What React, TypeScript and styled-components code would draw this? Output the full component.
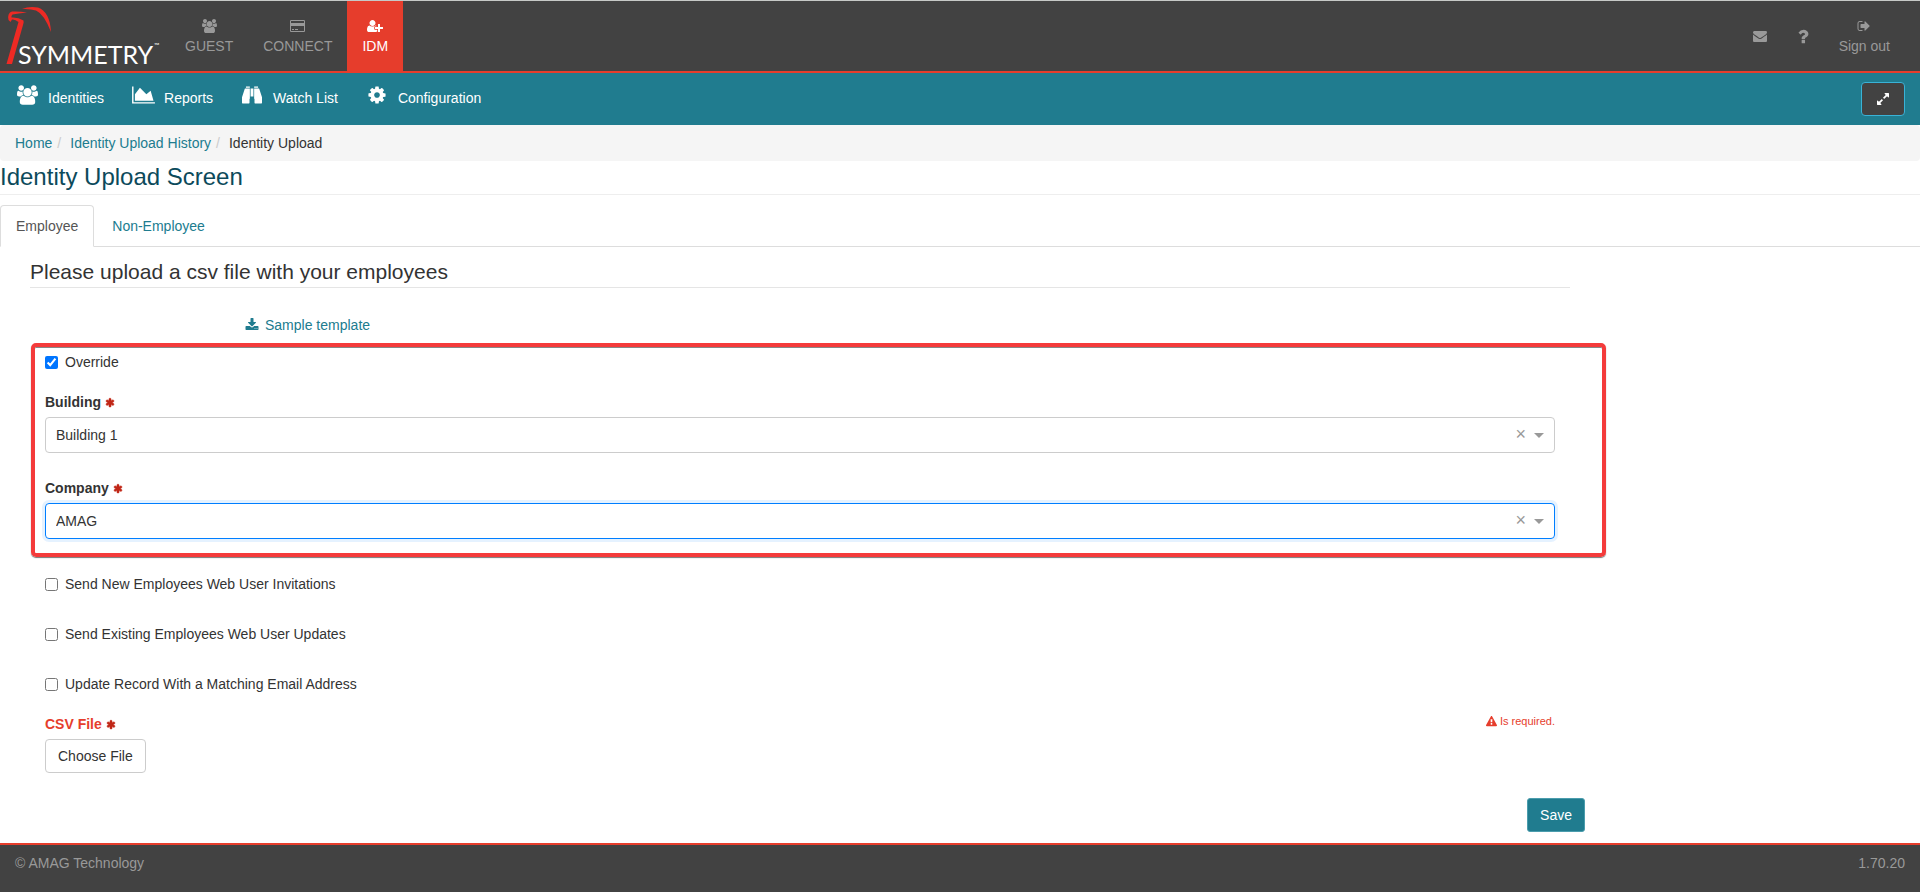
import React, { useRef, useState } from "react";
import styled, { createGlobalStyle, css } from "styled-components";

const teal = "#207c8f";
const red = "#e63d2c";
const dark = "#424242";

const GlobalStyle = createGlobalStyle`
  * { box-sizing: border-box; }
  body {
    margin: 0;
    background: #fff;
    color: #333;
    font: 14px/20px "Liberation Sans", Arial, sans-serif;
  }
  a { color: ${teal}; text-decoration: none; }
  button, select, input { font: inherit; color: inherit; }
`;

type Glyph = { w: number; x?: number; stroke?: number; d: string };

const glyphs: Record<string, Glyph> = {
  users: {
    w: 1920,
    d: "M593 896q-162 5-265 128h-134q-82 0-138-40.5t-56-118.5q0-353 124-353 6 0 43.5 21t97.5 42.5 119 21.5q67 0 133-23-5 37-5 66 0 139 81 256zm1071 637q0 120-73 189.5t-194 69.5h-874q-121 0-194-69.5t-73-189.5q0-53 3.5-103.5t14-109 26.5-108.5 43-97.5 62-81 85.5-53.5 111.5-20q10 0 43 21.5t73 48 107 48 135 21.5 135-21.5 107-48 73-48 43-21.5q61 0 111.5 20t85.5 53.5 62 81 43 97.5 26.5 108.5 14 109 3.5 103.5zm-1024-1277q0 106-75 181t-181 75-181-75-75-181 75-181 181-75 181 75 75 181zm704 384q0 159-112.5 271.5t-271.5 112.5-271.5-112.5-112.5-271.5 112.5-271.5 271.5-112.5 271.5 112.5 112.5 271.5zm576 225q0 78-56 118.5t-138 40.5h-134q-103-123-265-128 81-117 81-256 0-29-5-66 66 23 133 23 59 0 119-21.5t97.5-42.5 43.5-21q124 0 124 353zm-128-609q0 106-75 181t-181 75-181-75-75-181 75-181 181-75 181 75 75 181z",
  },
  card: {
    w: 1920,
    d: "M1760 128q66 0 113 47t47 113v1216q0 66-47 113t-113 47h-1600q-66 0-113-47t-47-113v-1216q0-66 47-113t113-47h1600zm-1600 128q-13 0-22.5 9.5t-9.5 22.5v224h1664v-224q0-13-9.5-22.5t-22.5-9.5h-1600zm1600 1280q13 0 22.5-9.5t9.5-22.5v-608h-1664v608q0 13 9.5 22.5t22.5 9.5h1600zm-1504-128v-128h256v128h-256zm384 0v-128h384v128h-384z",
  },
  userPlus: {
    w: 2048,
    d: "M704 896q-159 0-271.5-112.5t-112.5-271.5 112.5-271.5 271.5-112.5 271.5 112.5 112.5 271.5-112.5 271.5-271.5 112.5zm960 128h352q13 0 22.5 9.5t9.5 22.5v192q0 13-9.5 22.5t-22.5 9.5h-352v352q0 13-9.5 22.5t-22.5 9.5h-192q-13 0-22.5-9.5t-9.5-22.5v-352h-352q-13 0-22.5-9.5t-9.5-22.5v-192q0-13 9.5-22.5t22.5-9.5h352v-352q0-13 9.5-22.5t22.5-9.5h192q13 0 22.5 9.5t9.5 22.5v352zm-736 224q0 52 38 90t90 38h256v238q-68 50-171 50h-874q-121 0-194-69t-73-190q0-53 3.5-103.5t14-109 26.5-108.5 43-97.5 62-81 85.5-53.5 111.5-20q19 0 39 17 79 61 154.5 91.5t164.5 30.5 164.5-30.5 154.5-91.5q20-17 39-17 132 0 217 96h-223q-52 0-90 38t-38 90v192z",
  },
  chart: { w: 2048, d: "M2048 1536v128h-2048v-1536h128v1408h1920zm-384-1024l256 896h-1664v-576l448-576 576 576z" },
  binoculars: {
    w: 1792,
    d: "M704 320v896q0 14-9 23t-23 9v352q0 26-19 45t-45 19h-544q-26 0-45-19t-19-45v-512l249-745q7-23 31-23h424zm320 0v704h-256v-704h256zm768 768v512q0 26-19 45t-45 19h-544q-26 0-45-19t-19-45v-352q-14 0-23-9t-9-23v-896h424q24 0 31 23zm-1088-928v96h-352v-96q0-14 9-23t23-9h288q14 0 23 9t9 23zm736 0v96h-352v-96q0-14 9-23t23-9h288q14 0 23 9t9 23z",
  },
  cog: {
    w: 1792,
    d: "M1152 896q0-106-75-181t-181-75-181 75-75 181 75 181 181 75 181-75 75-181zm512-109v222q0 12-8 23t-20 13l-185 28q-19 54-39 91 35 50 107 138 10 12 10 25t-9 23q-27 37-99 108t-94 71q-12 0-26-9l-138-108q-44 23-91 38-16 136-29 186-7 28-36 28h-222q-14 0-24.5-8.5t-11.5-21.5l-28-184q-49-16-90-37l-141 107q-10 9-25 9-14 0-25-11-126-114-165-168-7-10-7-23 0-12 8-23 15-21 51-66.5t54-70.5q-27-50-41-99l-183-27q-13-2-21-12.5t-8-23.5v-222q0-12 8-23t19-13l186-28q14-46 39-92-40-57-107-138-10-12-10-24 0-10 9-23 26-36 98.5-107.5t94.5-71.5q13 0 26 10l138 107q44-23 91-38 16-136 29-186 7-28 36-28h222q14 0 24.5 8.5t11.5 21.5l28 184q49 16 90 37l142-107q9-9 24-9 13 0 25 10 129 119 165 170 7 8 7 22 0 12-8 23-15 21-51 66.5t-54 70.5q26 50 41 98l183 28q13 2 21 12.5t8 23.5z",
  },
  envelope: {
    w: 1792,
    d: "M1792 710v794q0 66-47 113t-113 47h-1472q-66 0-113-47t-47-113v-794q44 49 101 87 362 246 497 345 57 42 92.5 65.5t94.5 48 110 24.5h2q51 0 110-24.5t94.5-48 92.5-65.5q170-123 498-345 57-39 100-87zm0-294q0 79-49 151t-122 123q-376 261-468 325-10 7-42.5 30.5t-54 38-52 32.5-57.5 27-50 9h-2q-23 0-50-9t-57.5-27-52-32.5-54-38-42.5-30.5q-91-64-262-182.5t-205-142.5q-62-42-117-115.5t-55-136.5q0-78 41.5-130t118.5-52h1472q65 0 112.5 47t47.5 113z",
  },
  question: {
    w: 1100,
    x: 346,
    d: "M1088 1256v240q0 16-12 28t-28 12h-240q-16 0-28-12t-12-28v-240q0-16 12-28t28-12h240q16 0 28 12t12 28zm316-600q0 54-15.5 101t-35 76.5-55 59.5-57.5 43.5-61 35.5q-41 23-68.5 65t-27.5 67q0 17-12 32.5t-28 15.5h-240q-15 0-25.5-18.5t-10.5-37.5v-45q0-83 65-156.5t143-108.5q59-27 84-56t25-76q0-42-46.5-74t-107.5-32q-65 0-108 29-35 25-107 115-13 16-31 16-12 0-25-8l-164-125q-13-10-15.5-25t5.5-28q160-266 464-266 80 0 161 31t146 83 106 127.5 41 158.5z",
  },
  signOut: {
    w: 1792,
    d: "M704 1440q0 4 1 20t.5 26.5-3 23.5-10 19.5-20.5 6.5h-320q-119 0-203.5-84.5t-84.5-203.5v-704q0-119 84.5-203.5t203.5-84.5h320q13 0 22.5 9.5t9.5 22.5q0 4 1 20t.5 26.5-3 23.5-10 19.5-20.5 6.5h-320q-66 0-113 47t-47 113v704q0 66 47 113t113 47h312l11.5 1 11.5 3 8 5.5 7 9 2 13.5zm928-544q0 26-19 45l-544 544q-19 19-45 19t-45-19-19-45v-288h-448q-26 0-45-19t-19-45v-384q0-26 19-45t45-19h448v-288q0-26 19-45t45-19 45 19l544 544q19 19 19 45z",
  },
  download: {
    w: 1792,
    d: "M1344 1344q0-26-19-45t-45-19-45 19-19 45 19 45 45 19 45-19 19-45zm256 0q0-26-19-45t-45-19-45 19-19 45 19 45 45 19 45-19 19-45zm128-224v320q0 40-28 68t-68 28h-1472q-40 0-68-28t-28-68v-320q0-40 28-68t68-28h465l135 136q58 56 136 56t136-56l136-136h464q40 0 68 28t28 68zm-325-569q17 41-14 70l-448 448q-18 19-45 19t-45-19l-448-448q-31-29-14-70 17-39 59-39h256v-448q0-26 19-45t45-19h256q26 0 45 19t19 45v448h256q42 0 59 39z",
  },
  expand: {
    w: 1792,
    d: "M883 1056q0 13-10 23l-332 332 144 144q19 19 19 45t-19 45-45 19h-448q-26 0-45-19t-19-45v-448q0-26 19-45t45-19 45 19l144 144 332-332q10-10 23-10t23 10l114 114q10 10 10 23zm781-864v448q0 26-19 45t-45 19-45-19l-144-144-332 332q-10 10-23 10t-23-10l-114-114q-10-10-10-23t10-23l332-332-144-144q-19-19-19-45t19-45 45-19h448q26 0 45 19t19 45z",
  },
  asterisk: {
    w: 1792,
    stroke: 90,
    d: "M1546 986q46 26 59.5 77.5t-12.5 97.5l-64 110q-26 46-77.5 59.5t-97.5-12.5l-266-153v307q0 52-38 90t-90 38h-128q-52 0-90-38t-38-90v-307l-266 153q-46 26-97.5 12.5t-77.5-59.5l-64-110q-26-46-12.5-97.5t59.5-77.5l266-154-266-154q-46-26-59.5-77.5t12.5-97.5l64-110q26-46 77.5-59.5t97.5 12.5l266 153v-307q0-52 38-90t90-38h128q52 0 90 38t38 90v307l266-153q46-26 97.5-12.5t77.5 59.5l64 110q26 46 12.5 97.5t-59.5 77.5l-266 154z",
  },
  warning: {
    w: 1792,
    d: "M1024 1375v-190q0-14-9.5-23.5t-22.5-9.5h-192q-13 0-22.5 9.5t-9.5 23.5v190q0 14 9.5 23.5t22.5 9.5h192q13 0 22.5-9.5t9.5-23.5zm-2-374l18-459q0-12-10-19-13-11-24-11h-220q-11 0-24 11-10 7-10 21l17 457q0 10 10 16.5t24 6.5h185q14 0 23.5-6.5t10.5-16.5zm-14-934l768 1408q35 63-2 126-17 29-46.5 46t-63.5 17h-1536q-34 0-63.5-17t-46.5-46q-37-63-2-126l768-1408q17-31 47-49t65-18 65 18 47 49z",
  },
};

const Svg = styled.svg`
  display: block;
  flex: none;
  fill: currentColor;
  stroke: currentColor;
  overflow: visible;
`;

function Icon({ name, size = 14 }: { name: string; size?: number }) {
  const g = glyphs[name];
  return (
    <Svg
      height={size}
      width={Math.round((size * g.w) / 1792)}
      viewBox={`${g.x ?? 0} 0 ${g.w} 1792`}
      aria-hidden="true"
    >
      <path fillRule="evenodd" strokeWidth={g.stroke ?? 0} d={g.d} />
    </Svg>
  );
}

const Page = styled.div`
  min-height: 100vh;
  display: flex;
  flex-direction: column;
`;

const TopBar = styled.header`
  display: flex;
  background: ${dark};
  border-top: 1px solid #c6c9c7;
  border-bottom: 2px solid ${red};
`;

const Brand = styled.a`
  width: 170px;
  height: 70px;
`;

const Modules = styled.nav`
  display: flex;
  flex: 1;
`;

const ModuleLink = styled.a<{ $active?: boolean }>`
  display: flex;
  flex-direction: column;
  align-items: center;
  justify-content: center;
  padding: 0 15px;
  color: ${(p) => (p.$active ? "#fff" : "#999")};
  background: ${(p) => (p.$active ? red : "transparent")};
`;

const IconLine = styled.span`
  display: flex;
  align-items: center;
  height: 20px;
`;

const Tools = styled.nav`
  display: flex;
  padding-right: 15px;
`;

const SectionBar = styled.nav`
  display: flex;
  align-items: center;
  gap: 26px;
  height: 52px;
  padding: 0 15px 0 14px;
  background: ${teal};
`;

const SectionLink = styled.a`
  display: flex;
  align-items: center;
  gap: 8px;
  color: #fff;
  padding-bottom: 8px;
`;

const SectionIcon = styled.span`
  display: flex;
  justify-content: center;
  width: 26px;
`;

const SectionText = styled.span`
  padding-top: 6px;
`;

const ExpandButton = styled.button`
  display: flex;
  align-items: center;
  justify-content: center;
  width: 44px;
  height: 34px;
  margin-left: auto;
  padding: 0;
  color: #fff;
  background: ${dark};
  border: 1px solid #39b3d7;
  border-radius: 4px;
`;

const Crumbs = styled.ol`
  display: flex;
  margin: 0;
  padding: 8px 15px;
  list-style: none;
  background: #f5f5f5;
  border-radius: 4px;
`;

const Crumb = styled.li`
  & + &::before {
    content: "/";
    padding: 0 9px 0 5px;
    color: #ccc;
  }
`;

const Title = styled.h1`
  margin: 0 0 10px;
  padding-bottom: 1px;
  color: #0c4a5b;
  font-size: 24px;
  font-weight: normal;
  line-height: 32px;
  border-bottom: 1px solid #eee;
`;

const Tabs = styled.div`
  display: flex;
  gap: 2px;
  border-bottom: 1px solid #ddd;
`;

const Tab = styled.button<{ $active?: boolean }>`
  height: 42px;
  margin-bottom: -1px;
  padding: 0 15px;
  color: ${(p) => (p.$active ? "#555" : teal)};
  background: ${(p) => (p.$active ? "#fff" : "transparent")};
  border: 1px solid ${(p) => (p.$active ? "#ddd" : "transparent")};
  border-bottom-color: ${(p) => (p.$active ? "#fff" : "transparent")};
  border-radius: 4px 4px 0 0;
`;

const Form = styled.form`
  width: 83.3333%;
  padding: 10px 0 11px;
`;

const Legend = styled.h2`
  margin: 0 30px;
  font-size: 21px;
  font-weight: normal;
  line-height: 30px;
  border-bottom: 1px solid #e5e5e5;
`;

const TemplateLink = styled.a`
  display: flex;
  align-items: center;
  gap: 6px;
  width: max-content;
  margin: 27px 0 8px 245px;
`;

const Highlight = styled.section`
  margin: 0 -6px 0 31px;
  padding: 5px 47px 14px 10px;
  border: 4px solid #f43b3b;
  border-radius: 5px;
  box-shadow: 0 1px 1px #777, inset 0 1px 0 #888;
`;

const Plain = styled.section`
  padding: 0 45px;
`;

const CheckLabel = styled.label`
  display: flex;
  align-items: center;
  gap: 7px;
  width: max-content;
`;

const Check = styled.input`
  width: 13px;
  height: 13px;
  margin: 1px 0 0;
`;

const CheckList = styled.div`
  display: grid;
  gap: 30px;
  padding: 17px 0 20px;
`;

const FieldHead = styled.div`
  display: flex;
  justify-content: space-between;
`;

const FieldLabel = styled.label<{ $error?: boolean }>`
  display: flex;
  align-items: center;
  gap: 4px;
  height: 20px;
  font-weight: bold;
  color: ${(p) => (p.$error ? red : "#333")};
`;

const Required = styled.span`
  padding-top: 2px;
  color: #c02616;
`;

const Field = styled.div`
  padding-top: 20px;
  & + & {
    padding-top: 25px;
  }
`;

const SelectBox = styled.div<{ $focused?: boolean }>`
  display: flex;
  align-items: center;
  height: 36px;
  margin-top: 5px;
  padding-right: 10px;
  border: 1px solid #ccc;
  border-radius: 4px;
  ${(p) =>
    p.$focused &&
    css`
      border-color: #007eff;
      box-shadow: 0 0 0 3px rgba(0, 126, 255, 0.1);
    `}
`;

const Select = styled.select`
  flex: 1;
  height: 34px;
  padding: 0 10px;
  appearance: none;
  background: none;
  border: 0;
  outline: 0;
`;

const Clear = styled.button`
  padding: 0 0 3px;
  margin-right: 8px;
  color: #999;
  font-size: 18px;
  line-height: 20px;
  background: none;
  border: 0;
`;

const Caret = styled.span`
  border: 5px solid transparent;
  border-top-color: #999;
  border-bottom-width: 0;
`;

const ErrorText = styled.span`
  display: flex;
  align-items: center;
  gap: 3px;
  height: 14px;
  font-size: 11px;
  color: ${red};
`;

const Button = styled.button<{ $primary?: boolean }>`
  height: 34px;
  padding: 0 12px;
  color: ${(p) => (p.$primary ? "#fff" : "#333")};
  background: ${(p) => (p.$primary ? teal : "#fff")};
  border: 1px solid ${(p) => (p.$primary ? "#4b9dad" : "#ccc")};
  border-radius: ${(p) => (p.$primary ? 3 : 4)}px;
`;

const FileRow = styled.div`
  padding-top: 5px;
`;

const Actions = styled.div`
  display: flex;
  justify-content: flex-end;
  padding: 25px 15px 0;
`;

const Footer = styled.footer`
  display: flex;
  justify-content: space-between;
  margin-top: auto;
  padding: 8px 15px 19px;
  color: #999;
  background: ${dark};
  border-top: 2px solid ${red};
`;

function Logo() {
  return (
    <svg width="170" height="70" viewBox="0 1 170 70" role="img" aria-label="Symmetry">
      <g fill="#ee2a24">
        <path d="M22 9Q29 6 38 7.500Q50 12 51 32Q44 14 36 10.500Q30 8.500 22 9Z" />
        <path d="M8.500 20Q7 13 12 11.500Q19 11 27 12.500Q18 13.500 12.500 14.500Q11 16 11.500 17.500Q18 17 23.500 20.500Q24 22 23 25L12 64H6.500L18.500 22Q15 19 12 19.500L10.500 22Z" />
      </g>
      <text x="18" y="64" fill="#fff" fontFamily="Lato, sans-serif" fontSize="25">
        SYMMETRY
      </text>
      <text x="154" y="48" fill="#fff" fontFamily="Lato, sans-serif" fontSize="7">
        ™
      </text>
    </svg>
  );
}

type SelectFieldProps = { id: string; label: string; option: string; focused?: boolean };

function SelectField({ id, label, option, focused }: SelectFieldProps) {
  const [value, setValue] = useState(option);
  return (
    <Field>
      <FieldLabel htmlFor={id}>
        {label}
        <Required><Icon name="asterisk" size={10} /></Required>
      </FieldLabel>
      <SelectBox $focused={focused}>
        <Select id={id} value={value} onChange={(e) => setValue(e.target.value)}>
          <option value="" />
          <option value={option}>{option}</option>
        </Select>
        <Clear type="button" aria-label={`Clear ${label}`} onClick={() => setValue("")}>×</Clear>
        <Caret />
      </SelectBox>
    </Field>
  );
}

const sections = [
  { icon: "users", text: "Identities" },
  { icon: "chart", text: "Reports" },
  { icon: "binoculars", text: "Watch List" },
  { icon: "cog", text: "Configuration" },
];

const options = [
  "Send New Employees Web User Invitations",
  "Send Existing Employees Web User Updates",
  "Update Record With a Matching Email Address",
];

export default function App() {
  const file = useRef<HTMLInputElement>(null);
  return (
    <Page>
      <GlobalStyle />
      <TopBar>
        <Brand href="#"><Logo /></Brand>
        <Modules>
          <ModuleLink href="#guest"><IconLine><Icon name="users" /></IconLine>GUEST</ModuleLink>
          <ModuleLink href="#connect"><IconLine><Icon name="card" /></IconLine>CONNECT</ModuleLink>
          <ModuleLink href="#idm" $active><IconLine><Icon name="userPlus" /></IconLine>IDM</ModuleLink>
        </Modules>
        <Tools>
          <ModuleLink href="#messages" aria-label="Messages"><Icon name="envelope" /></ModuleLink>
          <ModuleLink href="#help" aria-label="Help"><Icon name="question" size={19} /></ModuleLink>
          <ModuleLink href="#signout"><IconLine><Icon name="signOut" /></IconLine>Sign out</ModuleLink>
        </Tools>
      </TopBar>
      <SectionBar>
        {sections.map((s) => (
          <SectionLink key={s.text} href="#">
            <SectionIcon><Icon name={s.icon} size={20} /></SectionIcon>
            <SectionText>{s.text}</SectionText>
          </SectionLink>
        ))}
        <ExpandButton type="button" aria-label="Full screen"><Icon name="expand" /></ExpandButton>
      </SectionBar>
      <Crumbs>
        <Crumb><a href="#">Home</a></Crumb>
        <Crumb><a href="#history">Identity Upload History</a></Crumb>
        <Crumb>Identity Upload</Crumb>
      </Crumbs>
      <Title>Identity Upload Screen</Title>
      <Tabs role="tablist">
        <Tab type="button" role="tab" aria-selected $active>Employee</Tab>
        <Tab type="button" role="tab" aria-selected={false}>Non-Employee</Tab>
      </Tabs>
      <Form>
        <Legend>Please upload a csv file with your employees</Legend>
        <TemplateLink href="#template"><Icon name="download" />Sample template</TemplateLink>
        <Highlight>
          <CheckLabel><Check type="checkbox" defaultChecked />Override</CheckLabel>
          <SelectField id="building" label="Building" option="Building 1" />
          <SelectField id="company" label="Company" option="AMAG" focused />
        </Highlight>
        <Plain>
          <CheckList>
            {options.map((o) => (
              <CheckLabel key={o}><Check type="checkbox" />{o}</CheckLabel>
            ))}
          </CheckList>
          <FieldHead>
            <FieldLabel htmlFor="csv" $error>
              CSV File
              <Required><Icon name="asterisk" size={10} /></Required>
            </FieldLabel>
            <ErrorText><Icon name="warning" size={11} />Is required.</ErrorText>
          </FieldHead>
          <FileRow>
            <Button type="button" onClick={() => file.current?.click()}>Choose File</Button>
            <input ref={file} id="csv" type="file" accept=".csv" hidden />
          </FileRow>
        </Plain>
        <Actions><Button type="button" $primary>Save</Button></Actions>
      </Form>
      <Footer><span>© AMAG Technology</span><span>1.70.20</span></Footer>
    </Page>
  );
}
